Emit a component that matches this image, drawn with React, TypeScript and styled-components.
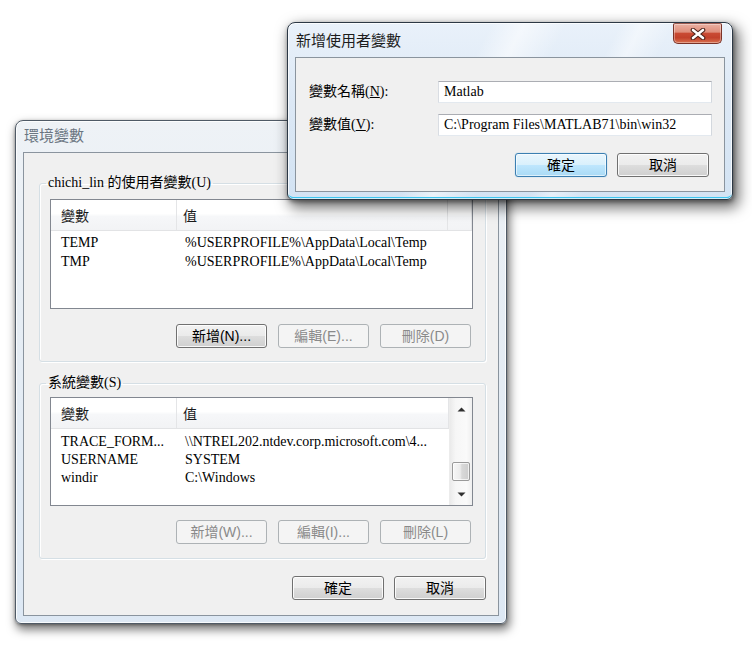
import React from "react";
import styled, { createGlobalStyle, css } from "styled-components";

const SERIF = `"Liberation Serif", "Noto Sans CJK TC", serif`;
const UI = `"Noto Sans CJK TC", "Liberation Sans", sans-serif`;
const BTN = `"Liberation Sans", "Noto Sans CJK TC", sans-serif`;

const GlobalStyle = createGlobalStyle`
  html, body { margin: 0; padding: 0; background: #ffffff; }
  body { font-family: ${SERIF}; font-size: 14px; color: #000; }
  *, *::before, *::after { box-sizing: border-box; }
`;

const Desktop = styled.div`
  position: relative;
  width: 752px;
  height: 645px;
  overflow: hidden;
  background: #ffffff;
`;

const activeFrame = css`
  background:
    linear-gradient(118deg, transparent 0%, transparent 38%, rgba(255,255,255,0.55) 44%, transparent 52%, transparent 100%),
    linear-gradient(118deg, transparent 0%, transparent 62%, rgba(255,255,255,0.45) 66%, transparent 72%, transparent 100%),
    linear-gradient(180deg, #e9f1fa 0%, #dce8f5 45%, #d3e3f3 100%);
  border-color: #2c3845;
  box-shadow:
    inset 0 0 0 1px rgba(255, 255, 255, 0.75),
    inset 0 -2px 0 #3cc4ef,
    4px 6px 14px 2px rgba(0, 0, 0, 0.55),
    1px 2px 4px rgba(0, 0, 0, 0.4);
`;

const inactiveFrame = css`
  background: linear-gradient(180deg, #eef2f6 0%, #e6edf4 40%, #dde8f4 100%);
  border-color: #4f5a66;
  box-shadow:
    inset 0 0 0 1px rgba(255, 255, 255, 0.8),
    2px 5px 10px 1px rgba(0, 0, 0, 0.5),
    0 1px 3px rgba(0, 0, 0, 0.35);
`;

const Window = styled.div<{ $x: number; $y: number; $w: number; $h: number; $active?: boolean }>`
  position: absolute;
  left: ${(p) => p.$x}px;
  top: ${(p) => p.$y}px;
  width: ${(p) => p.$w}px;
  height: ${(p) => p.$h}px;
  display: flex;
  flex-direction: column;
  padding: 0 7px 7px 7px;
  border: 1px solid;
  border-radius: 8px 8px 6px 6px;
  ${(p) => (p.$active ? activeFrame : inactiveFrame)}
`;

const TitleBar = styled.div<{ $h: number }>`
  flex: none;
  height: ${(p) => p.$h}px;
  display: flex;
  justify-content: space-between;
  align-items: flex-start;
`;

const Title = styled.div<{ $active?: boolean; $top: number }>`
  padding: ${(p) => p.$top}px 0 0 1px;
  font-family: ${UI};
  font-size: 15px;
  line-height: 20px;
  color: ${(p) => (p.$active ? "#1c1c1c" : "#6a7581")};
`;

const CloseButton = styled.div`
  width: 49px;
  height: 21px;
  margin-right: 3px;
  border: 1px solid #7a3328;
  border-top-color: #9a5a50;
  border-radius: 2px 2px 5px 5px;
  background: linear-gradient(180deg, #eab0a2 0%, #df8e7b 42%, #c94a33 50%, #c2412b 72%, #d9714f 100%);
  box-shadow: inset 0 0 0 1px rgba(255, 255, 255, 0.35);
  display: flex;
  align-items: center;
  justify-content: center;
`;

const Client = styled.div`
  flex: 1;
  min-height: 0;
  background: #f0f0f0;
  border: 1px solid #8a949e;
  display: flex;
  flex-direction: column;
`;

const MainBody = styled.div`
  flex: 1;
  display: flex;
  flex-direction: column;
  padding: 20px 12px 15px 15px;
`;

const Group = styled.fieldset<{ $pt: number; $pb: number; $mt?: number }>`
  margin: ${(p) => p.$mt ?? 0}px 0 0 0;
  padding: ${(p) => p.$pt}px 12px ${(p) => p.$pb}px 10px;
  border: 1px solid #d5dfe5;
  border-radius: 3px;
  box-shadow: inset 1px 1px 0 #ffffff, 1px 1px 0 #ffffff;
  min-width: 0;
`;

const Legend = styled.legend`
  margin-left: -4px;
  padding: 0 2px;
  font-family: ${SERIF};
  font-size: 14px;
  line-height: 20px;
  color: #000;
`;

const ListView = styled.div<{ $h: number }>`
  height: ${(p) => p.$h}px;
  border: 1px solid #828790;
  background: #ffffff;
  display: flex;
  overflow: hidden;
`;

const ListMain = styled.div`
  flex: 1;
  min-width: 0;
  display: flex;
  flex-direction: column;
`;

const Header = styled.div`
  flex: none;
  height: 31px;
  display: flex;
  border-bottom: 1px solid #e2e3e5;
  background: linear-gradient(180deg, #ffffff 0%, #ffffff 45%, #f6f7f9 55%, #f2f3f5 100%);
`;

const HeaderCell = styled.div<{ $w?: number; $pad?: number }>`
  ${(p) => (p.$w ? `width: ${p.$w}px; flex: none;` : `flex: 1;`)}
  padding-left: ${(p) => p.$pad ?? 0}px;
  border-right: 1px solid #e4e5e7;
  display: flex;
  align-items: center;
  font-family: ${UI};
  font-size: 14px;
  line-height: 18px;
  color: #1a1a1a;
`;

const Rows = styled.div<{ $pt: number }>`
  padding-top: ${(p) => p.$pt}px;
`;

const Row = styled.div<{ $h: number }>`
  display: flex;
  height: ${(p) => p.$h}px;
  align-items: center;
  font-family: ${SERIF};
  font-size: 14px;
  line-height: 18px;
  color: #000;
`;

const Cell = styled.div<{ $w?: number; $pad: number }>`
  ${(p) => (p.$w ? `width: ${p.$w}px; flex: none;` : `flex: 1;`)}
  padding-left: ${(p) => p.$pad}px;
  white-space: nowrap;
  overflow: hidden;
`;

const ScrollBar = styled.div`
  flex: none;
  width: 23px;
  display: flex;
  flex-direction: column;
  border-left: 1px solid #ececec;
  background: linear-gradient(90deg, #eaeaea 0%, #f6f6f6 25%, #fafafa 75%, #efefef 100%);
`;

const ScrollArrow = styled.div`
  flex: none;
  height: 22px;
  display: flex;
  align-items: center;
  justify-content: center;
`;

const ScrollTrack = styled.div`
  flex: 1;
  display: flex;
  flex-direction: column;
  align-items: center;
`;

const Thumb = styled.div<{ $offset: number; $size: number }>`
  margin-top: ${(p) => p.$offset}px;
  width: 18px;
  height: ${(p) => p.$size}px;
  border: 1px solid #9a9a9a;
  border-radius: 2px;
  background: linear-gradient(90deg, #f7f7f7 0%, #ececec 45%, #d9d9d9 55%, #cdcdcd 100%);
  box-shadow: inset 0 0 0 1px rgba(255, 255, 255, 0.7);
`;

const ButtonRow = styled.div<{ $mt: number; $mr?: number; $gap: number }>`
  display: flex;
  justify-content: flex-end;
  gap: ${(p) => p.$gap}px;
  margin-top: ${(p) => p.$mt}px;
  margin-right: ${(p) => p.$mr ?? 0}px;
`;

type BtnKind = "normal" | "default" | "disabled";

const Button = styled.button<{ $w: number; $kind?: BtnKind }>`
  width: ${(p) => p.$w}px;
  height: 24px;
  padding: 0;
  margin: 0;
  border: 1px solid #707070;
  border-radius: 3px;
  font-family: ${BTN};
  font-size: 14px;
  line-height: 20px;
  color: #000;
  background: linear-gradient(180deg, #f2f2f2 0%, #ebebeb 48%, #dddddd 52%, #cfcfcf 100%);
  box-shadow: inset 0 0 0 1px rgba(255, 255, 255, 0.85);
  ${(p) =>
    p.$kind === "disabled" &&
    css`
      border-color: #adb2b5;
      background: #f4f4f4;
      color: #8a8a8a;
      box-shadow: none;
    `}
  ${(p) =>
    p.$kind === "default" &&
    css`
      border-color: #3c7fb1;
      background: linear-gradient(180deg, #eaf6fd 0%, #d9f0fc 48%, #bee6fd 52%, #a9daf5 100%);
      box-shadow: inset 0 0 0 1px rgba(255, 255, 255, 0.6), 0 0 1px #6ab6e6;
    `}
`;

const DialogBody = styled.div`
  flex: 1;
  display: flex;
  flex-direction: column;
  padding: 23px 12px 14px 13px;
`;

const Form = styled.div`
  display: grid;
  grid-template-columns: 129px 1fr;
  row-gap: 11px;
  align-items: center;
`;

const Label = styled.div`
  font-family: ${SERIF};
  font-size: 14px;
  line-height: 18px;
  color: #000;
  u {
    text-decoration: underline;
    text-underline-offset: 1px;
  }
`;

const TextField = styled.div`
  height: 22px;
  padding: 0 5px;
  border: 1px solid #abadb3;
  border-left-color: #d9dde3;
  border-right-color: #d3d8de;
  border-bottom-color: #e3e9ef;
  background: #ffffff;
  font-family: ${SERIF};
  font-size: 14px;
  line-height: 20px;
  color: #000;
  white-space: nowrap;
  overflow: hidden;
`;

const Arrow = ({ up }: { up?: boolean }) => (
  <svg width="9" height="5" viewBox="0 0 9 5">
    <path d={up ? "M0.5 4.5 L4.5 0.5 L8.5 4.5 Z" : "M0.5 0.5 L4.5 4.5 L8.5 0.5 Z"} fill="#303030" />
  </svg>
);

const CloseGlyph = () => (
  <svg width="16" height="12" viewBox="0 0 16 12">
    <path d="M3 2 L13 10 M13 2 L3 10" stroke="#4a2018" strokeWidth="4.6" strokeLinecap="round" />
    <path d="M3 2 L13 10 M13 2 L3 10" stroke="#ffffff" strokeWidth="2.6" strokeLinecap="round" />
  </svg>
);

const userVars = [
  ["TEMP", "%USERPROFILE%\\AppData\\Local\\Temp"],
  ["TMP", "%USERPROFILE%\\AppData\\Local\\Temp"],
];

const sysVars = [
  ["TRACE_FORM...", "\\\\NTREL202.ntdev.corp.microsoft.com\\4..."],
  ["USERNAME", "SYSTEM"],
  ["windir", "C:\\Windows"],
];

export default function App() {
  return (
    <>
      <GlobalStyle />
      <Desktop>
        <Window $x={15} $y={120} $w={492} $h={504}>
          <TitleBar $h={31}>
            <Title $top={4}>環境變數</Title>
          </TitleBar>
          <Client>
            <MainBody>
              <Group $pt={6} $pb={13}>
                <Legend>chichi_lin 的使用者變數(U)</Legend>
                <ListView $h={110}>
                  <ListMain>
                    <Header>
                      <HeaderCell $w={126} $pad={10}>變數</HeaderCell>
                      <HeaderCell $w={271} $pad={6}>值</HeaderCell>
                      <HeaderCell />
                    </Header>
                    <Rows $pt={2}>
                      {userVars.map(([n, v]) => (
                        <Row key={n} $h={19}>
                          <Cell $w={126} $pad={10}>{n}</Cell>
                          <Cell $pad={8}>{v}</Cell>
                        </Row>
                      ))}
                    </Rows>
                  </ListMain>
                </ListView>
                <ButtonRow $mt={15} $mr={2} $gap={11}>
                  <Button $w={91}>新增(N)...</Button>
                  <Button $w={91} $kind="disabled">編輯(E)...</Button>
                  <Button $w={91} $kind="disabled">刪除(D)</Button>
                </ButtonRow>
              </Group>

              <Group $pt={4} $pb={14} $mt={11}>
                <Legend>系統變數(S)</Legend>
                <ListView $h={109}>
                  <ListMain>
                    <Header>
                      <HeaderCell $w={126} $pad={10}>變數</HeaderCell>
                      <HeaderCell $pad={6}>值</HeaderCell>
                    </Header>
                    <Rows $pt={4}>
                      {sysVars.map(([n, v]) => (
                        <Row key={n} $h={18}>
                          <Cell $w={126} $pad={10}>{n}</Cell>
                          <Cell $pad={8}>{v}</Cell>
                        </Row>
                      ))}
                    </Rows>
                  </ListMain>
                  <ScrollBar>
                    <ScrollArrow>
                      <Arrow up />
                    </ScrollArrow>
                    <ScrollTrack>
                      <Thumb $offset={42} $size={19} />
                    </ScrollTrack>
                    <ScrollArrow>
                      <Arrow />
                    </ScrollArrow>
                  </ScrollBar>
                </ListView>
                <ButtonRow $mt={14} $mr={2} $gap={11}>
                  <Button $w={91} $kind="disabled">新增(W)...</Button>
                  <Button $w={91} $kind="disabled">編輯(I)...</Button>
                  <Button $w={91} $kind="disabled">刪除(L)</Button>
                </ButtonRow>
              </Group>

              <ButtonRow $mt={17} $gap={10}>
                <Button $w={92}>確定</Button>
                <Button $w={92}>取消</Button>
              </ButtonRow>
            </MainBody>
          </Client>
        </Window>

        <Window $x={287} $y={22} $w={446} $h={178} $active>
          <TitleBar $h={34}>
            <Title $active $top={7}>新增使用者變數</Title>
            <CloseButton>
              <CloseGlyph />
            </CloseButton>
          </TitleBar>
          <Client>
            <DialogBody>
              <Form>
                <Label>
                  變數名稱(<u>N</u>):
                </Label>
                <TextField>Matlab</TextField>
                <Label>
                  變數值(<u>V</u>):
                </Label>
                <TextField>C:\Program Files\MATLAB71\bin\win32</TextField>
              </Form>
              <ButtonRow $mt={17} $mr={3} $gap={10}>
                <Button $w={92} $kind="default">確定</Button>
                <Button $w={92}>取消</Button>
              </ButtonRow>
            </DialogBody>
          </Client>
        </Window>
      </Desktop>
    </>
  );
}
